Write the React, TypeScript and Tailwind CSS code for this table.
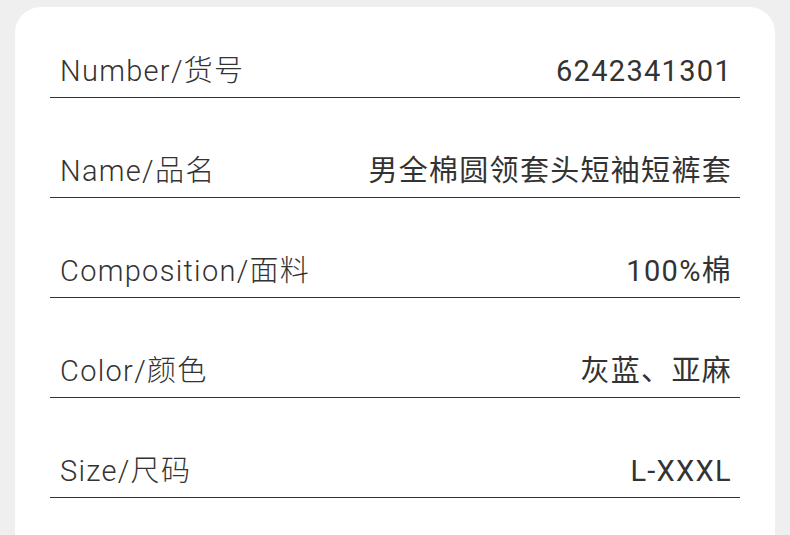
import React from "react";

const rows = [
  { label: "Number/货号", value: "6242341301" },
  { label: "Name/品名", value: "男全棉圆领套头短袖短裤套" },
  { label: "Composition/面料", value: "100%棉" },
  { label: "Color/颜色", value: "灰蓝、亚麻" },
  { label: "Size/尺码", value: "L-XXXL" },
];

const App = () => {
  return (
    <div className="w-[790px] h-[535px] overflow-hidden bg-[#efefef] pt-[7px] px-[15px]">
      <div
        className="bg-white rounded-t-[26px] h-[600px] px-[35px]"
        style={{ fontFamily: 'Roboto, "Noto Sans CJK SC", sans-serif' }}
      >
        {rows.map((row, i) => (
          <div
            key={row.label}
            className={`flex items-end justify-between border-b border-[#333333] pl-[10px] pr-[8px] pb-[6px] ${
              i === 0 ? "h-[91px]" : "h-[100px]"
            }`}
          >
            <span className="text-[29px] leading-[40px] font-light tracking-[1.3px] text-[#333333]">
              {row.label}
            </span>
            <span className="text-[29px] leading-[40px] font-normal tracking-[1.3px] text-[#333333]">
              {row.value}
            </span>
          </div>
        ))}
      </div>
    </div>
  );
};

export default App;
